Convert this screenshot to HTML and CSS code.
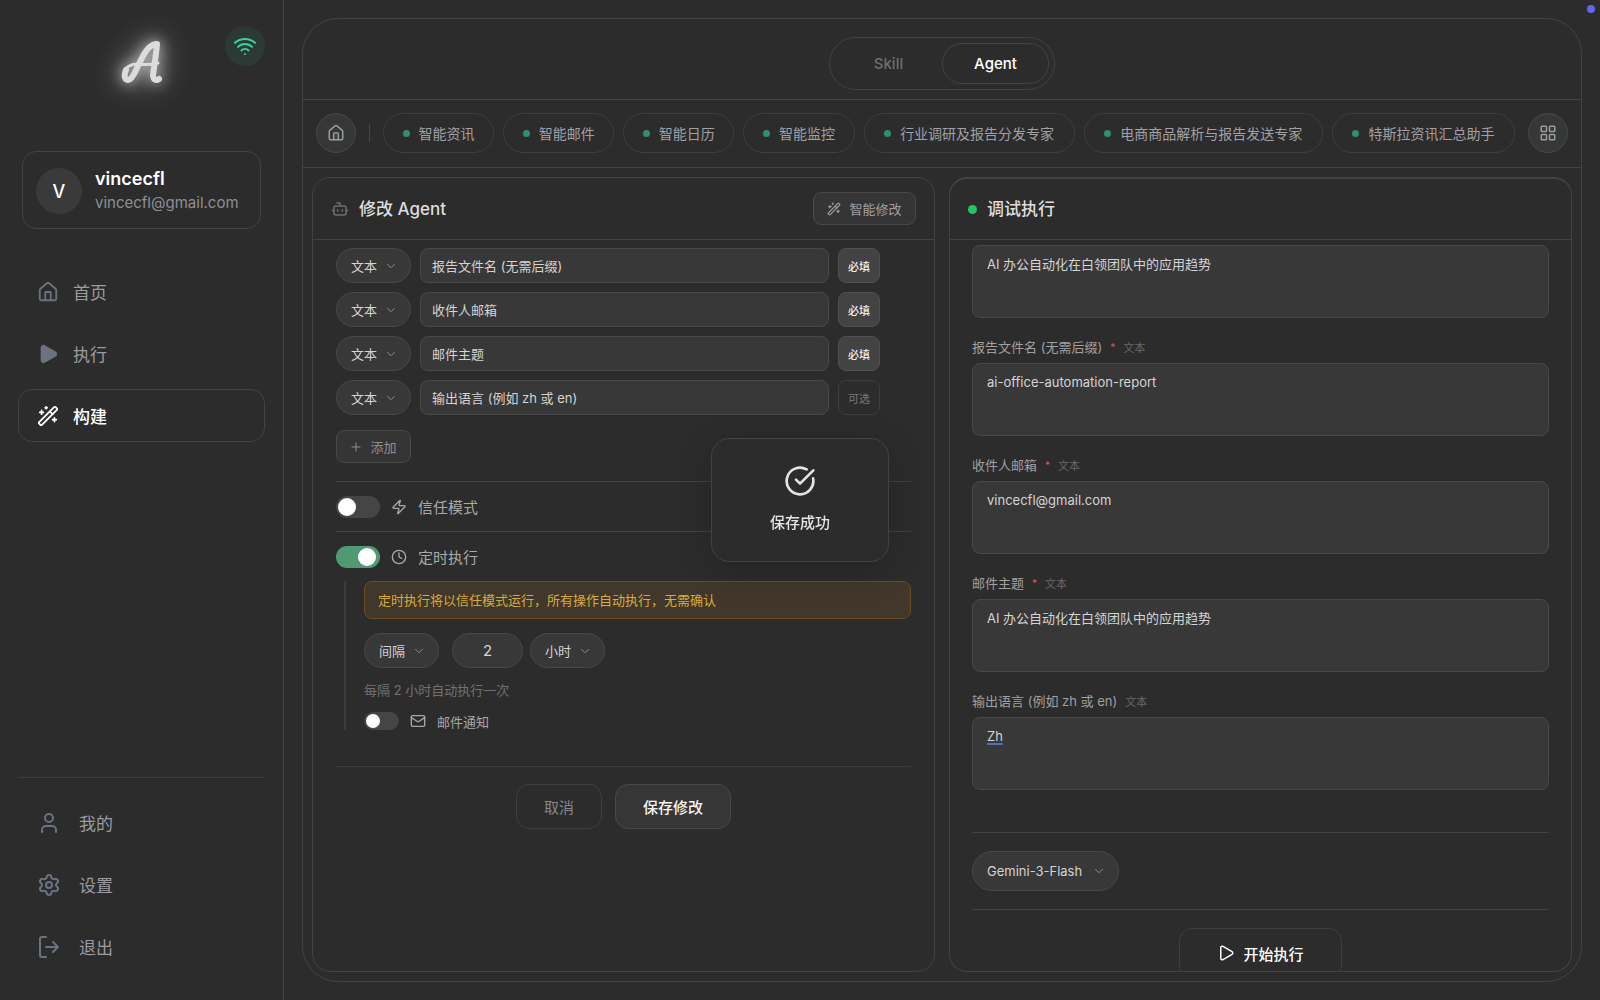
FILE: index.html
```html
<!DOCTYPE html>
<html lang="zh-CN">
<head>
<meta charset="utf-8">
<meta name="viewport" content="width=device-width, initial-scale=1">
<title>修改 Agent</title>
<link rel="stylesheet" href="styles.css">
</head>
<body>
<svg class="sprite" aria-hidden="true">
  <symbol id="i-home" viewBox="0 0 24 24"><path d="M15 21v-8a1 1 0 0 0-1-1h-4a1 1 0 0 0-1 1v8"/><path d="M3 10a2 2 0 0 1 .709-1.528l7-6a2 2 0 0 1 2.582 0l7 6A2 2 0 0 1 21 10v9a2 2 0 0 1-2 2H5a2 2 0 0 1-2-2z"/></symbol>
  <symbol id="i-play" viewBox="0 0 24 24"><path d="M5 5a2 2 0 0 1 3.008-1.728l11.997 6.998a2 2 0 0 1 .003 3.458l-12 7A2 2 0 0 1 5 19z"/></symbol>
  <symbol id="i-wand" viewBox="0 0 24 24"><path d="m21.64 3.64-1.28-1.28a1.21 1.21 0 0 0-1.72 0L2.36 18.64a1.21 1.21 0 0 0 0 1.72l1.28 1.28a1.2 1.2 0 0 0 1.72 0L21.64 5.36a1.2 1.2 0 0 0 0-1.72"/><path d="m14 7 3 3M5 6v4M19 14v4M10 2v2M7 8H3M21 16h-4M11 3H9"/></symbol>
  <symbol id="i-user" viewBox="0 0 24 24"><path d="M19 21v-2a4 4 0 0 0-4-4H9a4 4 0 0 0-4 4v2"/><circle cx="12" cy="7" r="4"/></symbol>
  <symbol id="i-gear" viewBox="0 0 24 24"><path d="M9.671 4.136a2.34 2.34 0 0 1 4.659 0 2.34 2.34 0 0 0 3.319 1.915 2.34 2.34 0 0 1 2.33 4.033 2.34 2.34 0 0 0 0 3.831 2.34 2.34 0 0 1-2.33 4.033 2.34 2.34 0 0 0-3.319 1.915 2.34 2.34 0 0 1-4.659 0 2.34 2.34 0 0 0-3.32-1.915 2.34 2.34 0 0 1-2.33-4.033 2.34 2.34 0 0 0 0-3.831A2.34 2.34 0 0 1 6.35 6.051a2.34 2.34 0 0 0 3.319-1.915"/><circle cx="12" cy="12" r="3"/></symbol>
  <symbol id="i-exit" viewBox="0 0 24 24"><path d="M9 22H5a2 2 0 0 1-2-2V4a2 2 0 0 1 2-2h4M16 17l5-5-5-5M21 12H9"/></symbol>
  <symbol id="i-wifi" viewBox="0 0 24 24"><path d="M12 20h.01M2 8.820a15 15 0 0 1 20 0M5 12.859a10 10 0 0 1 14 0M8.500 16.429a5 5 0 0 1 7 0"/></symbol>
  <symbol id="i-bot" viewBox="0 0 24 24"><path d="M12 8V4H8"/><rect x="4" y="8" width="16" height="12" rx="2"/><path d="M2 14h2M20 14h2M15 13v2M9 13v2"/></symbol>
  <symbol id="i-grid" viewBox="0 0 24 24"><rect x="3" y="3" width="7" height="7" rx="1"/><rect x="14" y="3" width="7" height="7" rx="1"/><rect x="14" y="14" width="7" height="7" rx="1"/><rect x="3" y="14" width="7" height="7" rx="1"/></symbol>
  <symbol id="i-down" viewBox="0 0 24 24"><path d="m5 8.500 7 7 7-7"/></symbol>
  <symbol id="i-plus" viewBox="0 0 24 24"><path d="M4 12h16M12 4v16"/></symbol>
  <symbol id="i-zap" viewBox="0 0 24 24"><path d="M4 14a1 1 0 0 1-.780-1.630l9.900-10.200a.5.5 0 0 1 .860.460l-1.920 6.020A1 1 0 0 0 13 10h7a1 1 0 0 1 .780 1.630l-9.900 10.200a.5.5 0 0 1-.860-.460l1.920-6.020A1 1 0 0 0 11 14z"/></symbol>
  <symbol id="i-clock" viewBox="0 0 24 24"><circle cx="12" cy="12" r="10"/><path d="M12 6v6l4 2"/></symbol>
  <symbol id="i-mail" viewBox="0 0 24 24"><rect x="2" y="4" width="20" height="16" rx="2"/><path d="m22 7-8.970 5.700a1.940 1.940 0 0 1-2.060 0L2 7"/></symbol>
  <symbol id="i-check" viewBox="0 0 24 24"><path d="M21.801 10A10 10 0 1 1 17 3.335"/><path d="m9 11 3 3L22 4"/></symbol>
</svg>

<div class="app">
  <aside class="sidebar">
    <div class="brand">
      <svg class="logo" viewBox="0 0 44 48" role="img" aria-label="A">
        <path class="stroke-bold" d="M36 6C27 7 22 20 17 30C14 37 11 42 8 42C4 42 4 36 6 32"/>
        <path class="stroke-thin" d="M5 35C5 29 11 26 18 26C25 27 31 27 38 25"/>
        <path class="stroke-bold" d="M37 6C36 18 34 29 33 37C33 42 36 43 39 41"/>
      </svg>
      <span class="network" title="在线"><svg class="icon"><use href="#i-wifi"/></svg></span>
    </div>
    <div class="profile">
      <span class="avatar">V</span>
      <div class="profile-text">
        <strong class="profile-name">vincecfl</strong>
        <span class="profile-mail">vincecfl@gmail.com</span>
      </div>
    </div>
    <nav class="nav">
      <a class="nav-item" href="#home"><svg class="icon"><use href="#i-home"/></svg>首页</a>
      <a class="nav-item nav-run" href="#run"><svg class="icon"><use href="#i-play"/></svg>执行</a>
      <a class="nav-item is-active" href="#build"><svg class="icon"><use href="#i-wand"/></svg>构建</a>
    </nav>
    <nav class="nav nav-bottom">
      <a class="nav-item" href="#me"><svg class="icon"><use href="#i-user"/></svg>我的</a>
      <a class="nav-item" href="#settings"><svg class="icon"><use href="#i-gear"/></svg>设置</a>
      <a class="nav-item" href="#logout"><svg class="icon"><use href="#i-exit"/></svg>退出</a>
    </nav>
  </aside>

  <main class="main">
    <div class="shell">
      <header class="mode-bar">
        <div class="segmented">
          <button class="segment" type="button">Skill</button>
          <button class="segment is-active" type="button">Agent</button>
        </div>
      </header>
      <div class="agent-bar">
        <button class="round-btn" type="button" aria-label="主页"><svg class="icon"><use href="#i-home"/></svg></button>
        <span class="bar-divider"></span>
        <div class="chips">
          <button class="chip" type="button">智能资讯</button>
          <button class="chip" type="button">智能邮件</button>
          <button class="chip" type="button">智能日历</button>
          <button class="chip" type="button">智能监控</button>
          <button class="chip chip-wide" type="button">行业调研及报告分发专家</button>
          <button class="chip chip-wide" type="button">电商商品解析与报告发送专家</button>
          <button class="chip chip-wide" type="button">特斯拉资讯汇总助手</button>
        </div>
        <button class="round-btn" type="button" aria-label="全部"><svg class="icon"><use href="#i-grid"/></svg></button>
      </div>

      <div class="panels">
        <section class="panel">
          <header class="panel-head">
            <svg class="icon bot"><use href="#i-bot"/></svg>
            <h2 class="panel-title">修改 Agent</h2>
            <button class="soft-btn smart" type="button"><svg class="icon"><use href="#i-wand"/></svg>智能修改</button>
          </header>
          <form class="edit-form">
            <div class="params">
              <div class="param">
                <span class="select"><select aria-label="类型"><option>文本</option></select><svg class="icon"><use href="#i-down"/></svg></span>
                <input class="param-name" type="text" aria-label="参数名" value="报告文件名 (无需后缀)">
                <button class="flag is-required" type="button">必填</button>
              </div>
              <div class="param">
                <span class="select"><select aria-label="类型"><option>文本</option></select><svg class="icon"><use href="#i-down"/></svg></span>
                <input class="param-name" type="text" aria-label="参数名" value="收件人邮箱">
                <button class="flag is-required" type="button">必填</button>
              </div>
              <div class="param">
                <span class="select"><select aria-label="类型"><option>文本</option></select><svg class="icon"><use href="#i-down"/></svg></span>
                <input class="param-name" type="text" aria-label="参数名" value="邮件主题">
                <button class="flag is-required" type="button">必填</button>
              </div>
              <div class="param">
                <span class="select"><select aria-label="类型"><option>文本</option></select><svg class="icon"><use href="#i-down"/></svg></span>
                <input class="param-name" type="text" aria-label="参数名" value="输出语言 (例如 zh 或 en)">
                <button class="flag" type="button">可选</button>
              </div>
            </div>
            <button class="soft-btn add" type="button"><svg class="icon"><use href="#i-plus"/></svg>添加</button>

            <div class="option">
              <input class="switch" type="checkbox" id="trust">
              <label class="option-label" for="trust"><svg class="icon"><use href="#i-zap"/></svg>信任模式</label>
            </div>
            <div class="option">
              <input class="switch" type="checkbox" id="schedule" checked>
              <label class="option-label" for="schedule"><svg class="icon"><use href="#i-clock"/></svg>定时执行</label>
            </div>
            <div class="schedule">
              <p class="notice">定时执行将以信任模式运行，所有操作自动执行，无需确认</p>
              <div class="interval">
                <span class="select"><select aria-label="方式"><option>间隔</option></select><svg class="icon"><use href="#i-down"/></svg></span>
                <div class="amount-group">
                  <input class="amount" type="text" inputmode="numeric" aria-label="间隔数值" value="2">
                  <span class="select"><select aria-label="单位"><option>小时</option></select><svg class="icon"><use href="#i-down"/></svg></span>
                </div>
              </div>
              <p class="hint">每隔 2 小时自动执行一次</p>
              <div class="notify">
                <input class="switch switch-small" type="checkbox" id="notify">
                <label class="notify-label" for="notify"><svg class="icon"><use href="#i-mail"/></svg>邮件通知</label>
              </div>
            </div>
            <div class="form-actions">
              <button class="btn" type="button">取消</button>
              <button class="btn btn-primary" type="submit">保存修改</button>
            </div>
          </form>
        </section>

        <section class="panel panel-debug">
          <header class="panel-head">
            <span class="status-dot"></span>
            <h2 class="panel-title">调试执行</h2>
          </header>
          <form class="debug-form">
            <div class="field">
              <textarea class="field-box" aria-label="主题">AI 办公自动化在白领团队中的应用趋势</textarea>
            </div>
            <div class="field">
              <label class="field-label" for="f-file">报告文件名 (无需后缀)<span class="star">*</span><small class="kind">文本</small></label>
              <textarea class="field-box" id="f-file">ai-office-automation-report</textarea>
            </div>
            <div class="field">
              <label class="field-label" for="f-mail">收件人邮箱<span class="star">*</span><small class="kind">文本</small></label>
              <textarea class="field-box" id="f-mail">vincecfl@gmail.com</textarea>
            </div>
            <div class="field">
              <label class="field-label" for="f-subject">邮件主题<span class="star">*</span><small class="kind">文本</small></label>
              <textarea class="field-box" id="f-subject">AI 办公自动化在白领团队中的应用趋势</textarea>
            </div>
            <div class="field">
              <label class="field-label" for="f-lang">输出语言 (例如 zh 或 en)<small class="kind">文本</small></label>
              <textarea class="field-box is-marked" id="f-lang">Zh</textarea>
            </div>
            <div class="model-row">
              <span class="select select-model"><select aria-label="模型"><option>Gemini-3-Flash</option></select><svg class="icon"><use href="#i-down"/></svg></span>
            </div>
            <div class="run-row">
              <button class="btn btn-run" type="button"><svg class="icon"><use href="#i-play"/></svg>开始执行</button>
            </div>
          </form>
        </section>
      </div>
    </div>
  </main>
</div>

<div class="toast" role="status">
  <svg class="icon"><use href="#i-check"/></svg>
  <span>保存成功</span>
</div>
<span class="corner-dot"></span>
</body>
</html>
```

FILE: styles.css
```css
:root {
  --bg: #2c2c2c;
  --line: #424242;
  --fill: #383838;
  --fill-line: #484848;
  --text: #d4d4d4;
  --muted: #9b9ba1;
}

* { box-sizing: border-box; }

body {
  margin: 0;
  background: var(--bg);
  color: var(--text);
  font-family: Inter, "Noto Sans CJK SC", sans-serif;
  font-size: 13px;
}

button, input, select, textarea { font: inherit; color: inherit; margin: 0; }
button { cursor: pointer; background: none; padding: 0; }
h2, p { margin: 0; }

.sprite { position: absolute; width: 0; height: 0; }

.icon {
  display: block;
  flex: none;
  width: 16px;
  height: 16px;
  fill: none;
  stroke: currentColor;
  stroke-width: 2;
  stroke-linecap: round;
  stroke-linejoin: round;
}

.app { display: flex; height: 100vh; }

/* Sidebar */
.sidebar {
  flex: none;
  display: flex;
  flex-direction: column;
  width: 284px;
  padding: 26px 18px 28px;
  border-right: 1px solid #444;
}

.brand {
  position: relative;
  display: flex;
  justify-content: center;
  height: 125px;
  padding-top: 12px;
}

.logo {
  width: 44px;
  height: 48px;
  overflow: visible;
  fill: none;
  stroke: #dcdcdc;
  stroke-linecap: round;
  filter: drop-shadow(0 0 7px rgba(255, 255, 255, .7)) drop-shadow(0 0 14px rgba(255, 255, 255, .5));
}
.stroke-bold { stroke-width: 6; }
.stroke-thin { stroke-width: 3; }

.network {
  position: absolute;
  top: 0;
  right: 0;
  display: grid;
  place-items: center;
  width: 40px;
  height: 40px;
  border-radius: 50%;
  background: #2b3a35;
  color: #3ecf9b;
}
.network .icon { width: 24px; height: 24px; }

.profile {
  display: flex;
  align-items: center;
  gap: 13px;
  height: 78px;
  margin: 0 4px;
  padding: 2px 13px 0;
  border: 1px solid var(--line);
  border-radius: 14px;
}
.avatar {
  display: grid;
  place-items: center;
  flex: none;
  width: 46px;
  height: 46px;
  border-radius: 50%;
  background: #3a3a3a;
  color: #fff;
  font-size: 18px;
  font-weight: 500;
}
.profile-text { display: flex; flex-direction: column; min-width: 0; }
.profile-name { color: #fff; font-size: 18px; font-weight: 600; line-height: 24px; }
.profile-mail { color: #8d8f94; font-size: 15px; line-height: 24px; }

.nav { display: flex; flex-direction: column; gap: 10px; margin-top: 36px; }
.nav-item {
  display: flex;
  align-items: center;
  gap: 14px;
  height: 53px;
  margin-bottom: -1px;
  padding: 0 18px;
  border: 1px solid transparent;
  border-radius: 14px;
  color: var(--muted);
  font-size: 17px;
  text-decoration: none;
}
.nav-item .icon { width: 22px; height: 22px; color: #6b7280; }
.nav-run .icon { fill: currentColor; }
.nav-item.is-active { border-color: var(--line); color: #fff; font-weight: 500; }
.nav-item.is-active .icon { color: #fff; }
.nav-bottom { margin-top: auto; padding-top: 18px; border-top: 1px solid #3d3d3d; }
.nav-bottom .nav-item { gap: 18px; }
.nav-bottom .icon { width: 24px; height: 24px; }

/* Workspace */
.main { flex: 1; min-width: 0; padding: 18px; }
.shell {
  display: flex;
  flex-direction: column;
  height: 100%;
  border: 1px solid var(--line);
  border-radius: 36px;
  overflow: hidden;
}

.mode-bar {
  flex: none;
  display: flex;
  justify-content: center;
  padding: 18px 0 9px;
  border-bottom: 1px solid var(--line);
}
.segmented {
  display: flex;
  padding: 5px;
  border: 1px solid var(--line);
  border-radius: 27px;
}
.segment {
  width: 107px;
  height: 41px;
  border: 1px solid transparent;
  border-radius: 20px;
  color: #6b6e75;
  font-size: 15px;
  font-weight: 500;
}
.segment.is-active { border-color: var(--line); color: #fff; }

.agent-bar {
  flex: none;
  display: flex;
  align-items: center;
  gap: 13px;
  padding: 13px 13px 14px;
  border-bottom: 1px solid var(--line);
}
.round-btn {
  display: grid;
  place-items: center;
  flex: none;
  width: 40px;
  height: 40px;
  border: 1px solid var(--fill-line);
  border-radius: 50%;
  background: #363737;
  color: var(--muted);
}
.round-btn .icon { width: 18px; height: 18px; }
.bar-divider { flex: none; width: 1px; height: 18px; background: var(--fill-line); }
.chips { flex: 1; display: flex; gap: 9px; min-width: 0; overflow: hidden; }
.chip {
  flex: 1 0 auto;
  display: flex;
  align-items: center;
  justify-content: center;
  gap: 9px;
  height: 40px;
  padding: 0 18px;
  border: 1px solid #3e3e3e;
  border-radius: 20px;
  color: #a0a0a6;
  font-size: 14px;
  white-space: nowrap;
}
.chip-wide { padding: 0 19px; }
.chip::before {
  content: "";
  width: 7px;
  height: 7px;
  border-radius: 50%;
  background: #2e916c;
}

.panels { flex: 1; display: flex; gap: 14px; min-height: 0; padding: 9px; }
.panel {
  flex: 1 1 0;
  display: flex;
  flex-direction: column;
  min-width: 0;
  border: 1px solid var(--line);
  border-radius: 18px;
  overflow: hidden;
}
.panel-debug { border-top-width: 2px; }
.panel-head {
  flex: none;
  display: flex;
  align-items: center;
  gap: 10px;
  height: 62px;
  padding: 0 18px;
  border-bottom: 1px solid var(--line);
}
.panel-debug .panel-head { height: 61px; }
.panel-title { font-size: 17px; font-weight: 500; line-height: 20px; color: #dedede; }
.bot { color: #6b6e78; width: 18px; height: 18px; }
.status-dot { width: 9px; height: 9px; border-radius: 50%; background: #22c55e; }

.soft-btn {
  display: flex;
  align-items: center;
  justify-content: center;
  gap: 8px;
  height: 33px;
  border: 1px solid var(--fill-line);
  border-radius: 8px;
  background: #353535;
  color: #a0a0a4;
}
.soft-btn .icon { width: 14px; height: 14px; }
.smart { width: 103px; margin-left: auto; }
.add { width: 75px; margin-top: 15px; color: #8e8e8e; }
.add .icon { width: 12px; height: 12px; }

.edit-form { padding: 8px 23px; }
.params { display: flex; flex-direction: column; gap: 9px; padding-right: 31px; }
.param { display: flex; gap: 9px; }

.select { position: relative; display: flex; flex: none; width: 75px; height: 35px; }
.select select {
  width: 100%;
  padding: 0 14px;
  border: 1px solid var(--fill-line);
  border-radius: 20px;
  background: var(--fill);
  appearance: none;
  font-size: 13px;
}
.select .icon {
  position: absolute;
  top: 0;
  bottom: 0;
  right: 14px;
  width: 12px;
  height: 12px;
  margin: auto 0;
  color: #8b8b8b;
  pointer-events: none;
}
.select-model { width: 147px; height: 40px; }

.param-name {
  flex: 1;
  min-width: 0;
  height: 35px;
  padding: 0 11px;
  border: 1px solid var(--fill-line);
  border-radius: 8px;
  background: var(--fill);
}
.flag {
  width: 42px;
  height: 35px;
  border: 1px solid #3e3e3e;
  border-radius: 8px;
  color: #7a7a7a;
  font-size: 11px;
}
.flag.is-required { border-color: #505050; background: #434343; color: #f0f0f0; font-weight: 500; }

.option {
  display: flex;
  align-items: center;
  gap: 11px;
  height: 50px;
  border-top: 1px solid var(--line);
}
.add + .option { margin-top: 18px; }
.option-label, .notify-label { display: flex; align-items: center; gap: 11px; color: #a8a8a8; font-size: 15px; }
.notify-label { font-size: 13px; }

.switch {
  flex: none;
  width: 44px;
  height: 22px;
  padding: 2px;
  border-radius: 11px;
  background: #454545;
  appearance: none;
}
.switch::before {
  content: "";
  display: block;
  width: 18px;
  height: 18px;
  border-radius: 50%;
  background: #fff;
}
.switch:checked { background: #4f9a72; }
.switch:checked::before { margin-left: 20px; }
.switch-small { width: 35px; height: 18px; }
.switch-small::before { width: 14px; height: 14px; }

.schedule { margin-left: 8px; padding-left: 18px; border-left: 2px solid #3c3c3c; }
.notice {
  padding: 8px 13px;
  border: 1px solid #6a4c22;
  border-radius: 8px;
  background: #41372b;
  color: #d6ac3c;
  line-height: 20px;
}
.interval { display: flex; gap: 13px; margin-top: 14px; }
.amount-group { display: flex; gap: 7px; }
.amount {
  width: 71px;
  height: 35px;
  border: 1px solid var(--fill-line);
  border-radius: 18px;
  background: var(--fill);
  font-size: 15px;
  text-align: center;
}
.hint { margin-top: 12px; color: #717171; line-height: 20px; }
.notify { display: flex; align-items: center; gap: 11px; margin-top: 12px; height: 18px; }

.form-actions {
  display: flex;
  justify-content: center;
  gap: 13px;
  margin-top: 36px;
  padding-top: 17px;
  border-top: 1px solid #3c3c3c;
}
.btn {
  height: 45px;
  padding: 0 27px;
  border: 1px solid #3e3e3e;
  border-radius: 13px;
  color: #85878c;
  font-size: 15px;
}
.btn-primary { border-color: var(--fill-line); background: #363636; color: #f4f4f4; font-weight: 500; }

/* Debug form */
.debug-form { flex: none; display: flex; flex-direction: column; padding: 5px 22px; }
.field { display: flex; flex-direction: column; }
.field-label {
  display: flex;
  align-items: center;
  height: 45px;
  padding-top: 12px;
  color: #a0a0a0;
}
.star { margin-left: 8px; color: #e0564f; font-size: 10px; }
.kind { margin-left: 8px; color: #686868; font-size: 11px; }
.field-box {
  display: block;
  width: 100%;
  height: 73px;
  padding: 8px 14px;
  border: 1px solid var(--fill-line);
  border-radius: 8px;
  background: var(--fill);
  line-height: 20px;
  resize: none;
}
.is-marked { text-decoration: underline 2px #4b74b0; text-underline-offset: 2px; }

.model-row {
  margin-top: 42px;
  padding: 18px 0;
  border-top: 1px solid var(--line);
  border-bottom: 1px solid var(--line);
}
.run-row { display: flex; justify-content: center; padding-top: 18px; }
.btn-run {
  display: flex;
  align-items: center;
  gap: 8px;
  height: 50px;
  padding: 0 37px;
  color: #fff;
  font-weight: 500;
}
.btn-run .icon { width: 18px; height: 18px; }

/* Overlays */
.toast {
  position: fixed;
  top: 50%;
  left: 50%;
  transform: translate(-50%, -50%);
  display: flex;
  flex-direction: column;
  align-items: center;
  justify-content: center;
  gap: 14px;
  width: 178px;
  height: 124px;
  padding-bottom: 4px;
  border: 1px solid var(--line);
  border-radius: 18px;
  background: var(--bg);
  box-shadow: 0 8px 36px rgba(0, 0, 0, .2);
  color: #e4e4e4;
  font-size: 15px;
  font-weight: 500;
}
.toast .icon { width: 32px; height: 32px; }
.corner-dot {
  position: fixed;
  top: 5px;
  right: 5px;
  width: 8px;
  height: 8px;
  border-radius: 50%;
  background: #6366f1;
}
```
